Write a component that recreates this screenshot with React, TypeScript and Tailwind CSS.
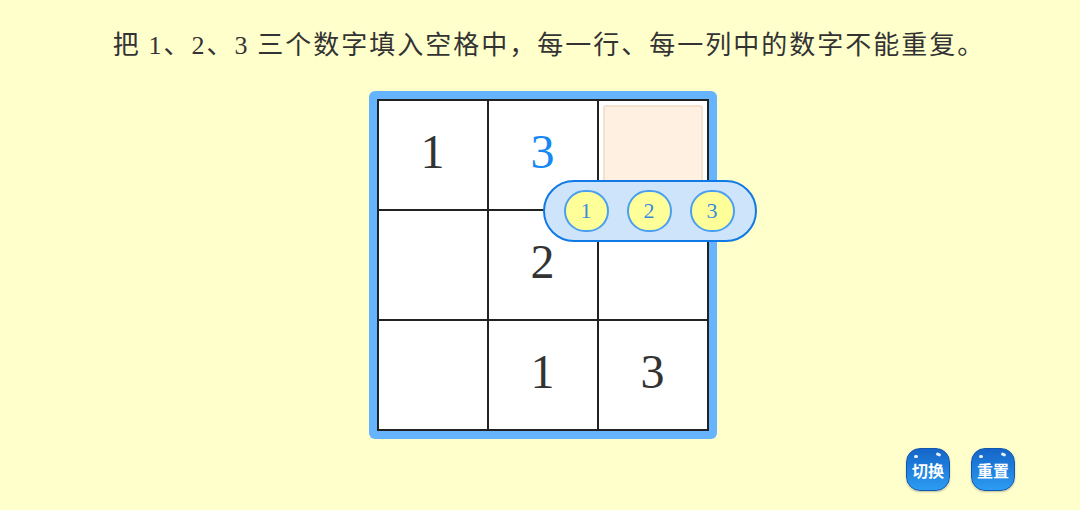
const CJK = "font-['Noto_Sans_CJK_SC',sans-serif]";
const SERIF = "font-['Liberation_Serif','DejaVu_Serif',serif]";

type Cell = { value?: string; blue?: boolean; active?: boolean };

const BOARD: Cell[] = [
  { value: "1" },
  { value: "3", blue: true },
  { active: true },
  {},
  { value: "2" },
  {},
  {},
  { value: "1" },
  { value: "3" },
];

function Num({ children }: { children: string }) {
  return <span className={SERIF}>{children}</span>;
}

function RoundButton({ label }: { label: string }) {
  return (
    <button className="relative grid h-[43px] w-[44px] place-items-center rounded-[14px] border border-[#1256b0] bg-gradient-to-b from-[#1565c8] to-[#2d9cf2] shadow-[0_1px_2px_rgba(0,0,0,0.25)]">
      <span className="absolute left-[7px] top-[6px] h-[3px] w-[4px] rounded-full bg-white/90" />
      <span className="absolute right-[8px] top-[4px] h-[3px] w-[5px] rotate-[20deg] rounded-full bg-white/90" />
      <span className={`${CJK} text-[16px] font-semibold leading-none text-white`}>{label}</span>
    </button>
  );
}

export default function App() {
  return (
    <div className="flex h-[510px] w-[1080px] flex-col bg-[#ffffcc]">
      <h1
        className={`${CJK} pl-[18px] pt-[25px] text-center text-[26px] leading-[36px] font-normal tracking-[2px] text-[#333]`}
      >
        把 <Num>1</Num>、<Num>2</Num>、<Num>3</Num> 三个数字填入空格中，每一行、每一列中的数字不能重复。
      </h1>

      <div className="mt-[27px] flex justify-center pl-[5px]">
        <div className="relative rounded-[6px] bg-[#66b3ff] p-2">
          <div className="grid grid-cols-3 gap-[2px] bg-[#222] p-[2px]">
            {BOARD.map((cell, i) => (
              <div
                key={i}
                className="grid h-[108px] w-[108px] place-items-center bg-white p-[4px]"
              >
                {cell.active ? (
                  <div className="h-full w-full rounded-[3px] border-2 border-[#f3e2d0] bg-[#fff0e1]" />
                ) : (
                  <span
                    className={`${SERIF} pb-[6px] text-[48px] leading-none ${
                      cell.blue ? "text-[#1687f5]" : "text-[#333]"
                    }`}
                  >
                    {cell.value}
                  </span>
                )}
              </div>
            ))}
          </div>

          {/* number picker */}
          <div className="absolute left-[174px] top-[89px] flex h-[62px] w-[214px] items-center gap-[18px] rounded-full border-2 border-[#0f7ae6] bg-[#cde4fb] pl-[19px]">
            {["1", "2", "3"].map((n) => (
              <span
                key={n}
                className={`${SERIF} grid h-[42px] w-[45px] place-items-center rounded-full border-2 border-[#4a9ff0] bg-[#ffff99] text-[22px] leading-none text-[#3b8ae0]`}
              >
                {n}
              </span>
            ))}
          </div>
        </div>
      </div>

      <div className="mt-[9px] flex justify-end gap-[21px] pr-[65px]">
        <RoundButton label="切换" />
        <RoundButton label="重置" />
      </div>
    </div>
  );
}
